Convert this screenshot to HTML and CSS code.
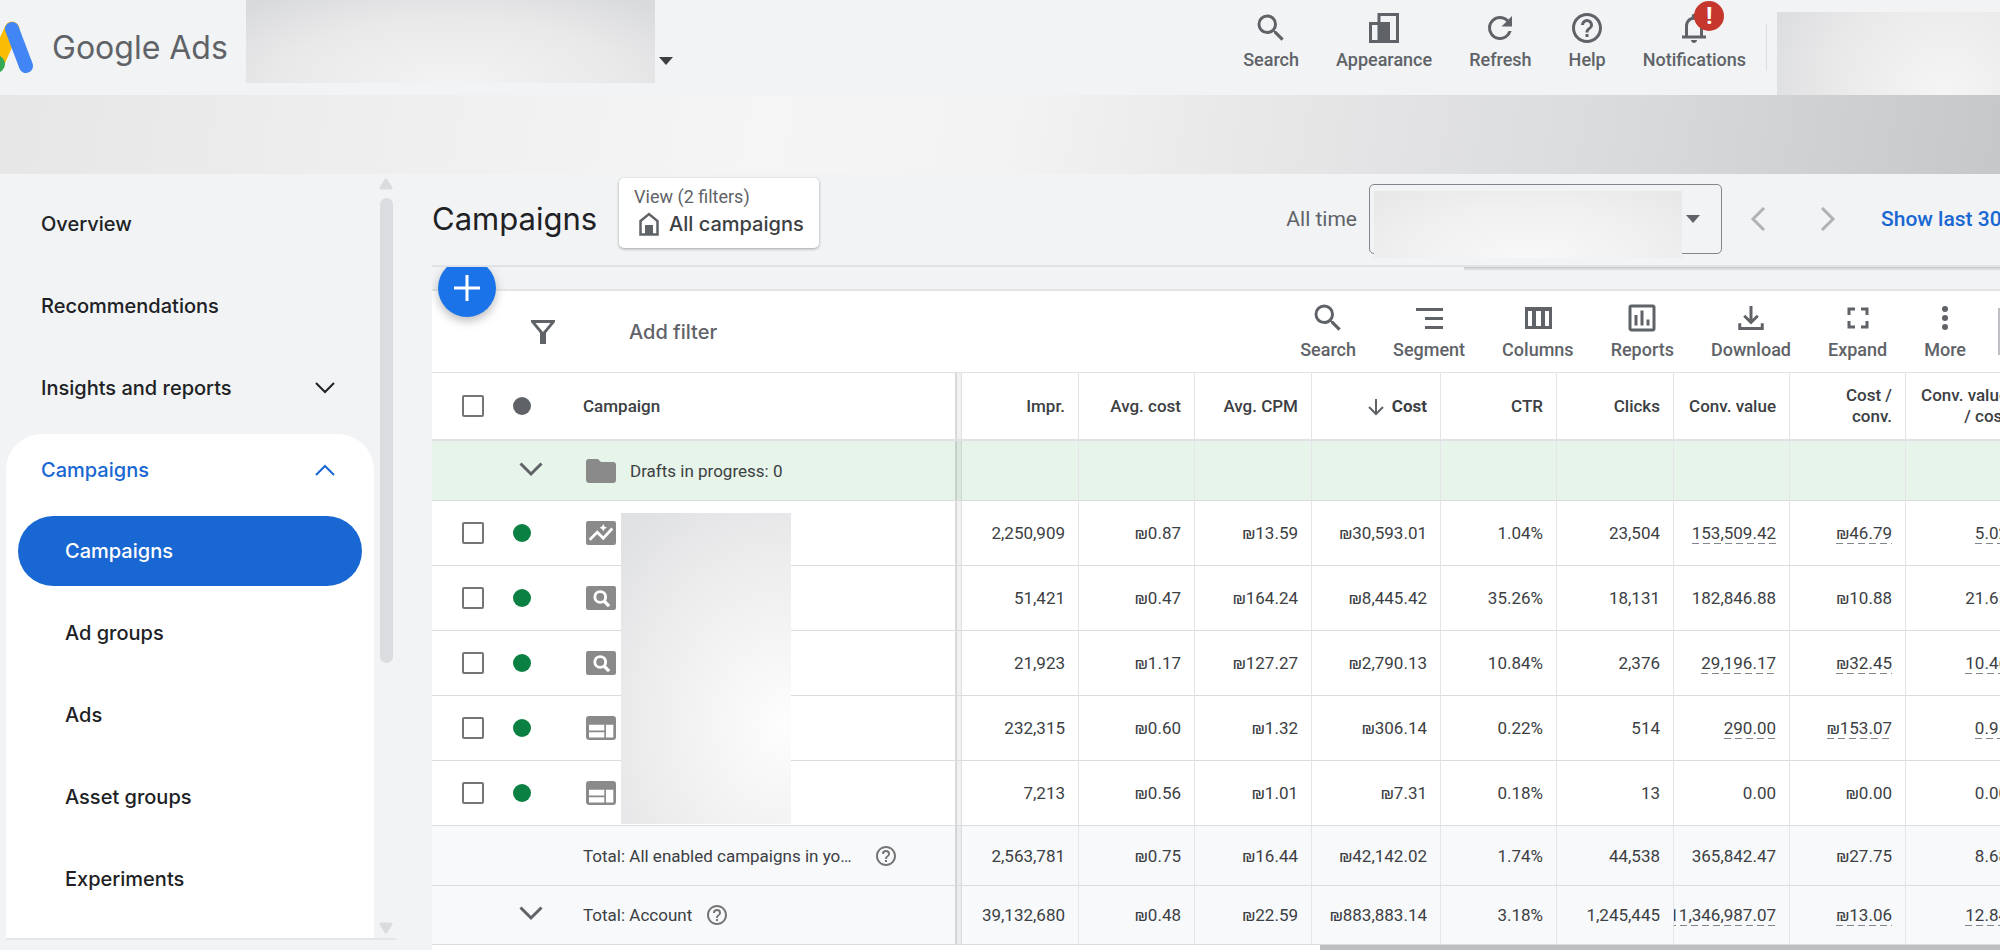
FILE: index.html
```html
<!DOCTYPE html>
<html lang="en">
<head>
<meta charset="utf-8">
<title>Campaigns - Google Ads</title>
<link rel="stylesheet" href="styles.css">
</head>
<body>
<svg class="sprite" aria-hidden="true">
  <symbol id="i-search" viewBox="0 0 24 24"><path d="M15.5 14h-.79l-.28-.27A6.47 6.47 0 0 0 16 9.5 6.5 6.5 0 1 0 9.5 16c1.61 0 3.09-.59 4.23-1.57l.27.28v.79l5 4.99L20.49 19l-4.99-5zm-6 0C7.01 14 5 11.99 5 9.5S7.01 5 9.5 5 14 7.01 14 9.5 11.99 14 9.5 14z"/></symbol>
  <symbol id="i-help" viewBox="0 0 24 24"><path d="M11 18h2v-2h-2v2zm1-16C6.48 2 2 6.48 2 12s4.48 10 10 10 10-4.48 10-10S17.52 2 12 2zm0 18c-4.41 0-8-3.59-8-8s3.59-8 8-8 8 3.59 8 8-3.59 8-8 8zm0-14a4 4 0 0 0-4 4h2c0-1.1.9-2 2-2s2 .9 2 2c0 2-3 1.75-3 5h2c0-2.25 3-2.5 3-5a4 4 0 0 0-4-4z"/></symbol>
  <symbol id="i-down" viewBox="0 0 24 24"><path d="M5 7l7 7 7-7" fill="none" stroke="currentColor" stroke-width="2"/></symbol>
  <symbol id="i-searchcard" viewBox="0 0 24 24"><path fill-rule="evenodd" d="M3.500 4h17A1.500 1.500 0 0 1 22 5.500v13a1.500 1.500 0 0 1-1.500 1.500h-17A1.500 1.500 0 0 1 2 18.500v-13A1.500 1.500 0 0 1 3.500 4z"/><circle cx="11.500" cy="11.300" r="3.600" fill="none" stroke="#fff" stroke-width="1.900"/><path d="M14 14l3.400 3.400" stroke="#fff" stroke-width="2.200"/></symbol>
  <symbol id="i-display" viewBox="0 0 24 24"><path fill-rule="evenodd" d="M20 4H4a2 2 0 0 0-2 2v12c0 1.100.9 2 2 2h16a2 2 0 0 0 2-2V6a2 2 0 0 0-2-2zM14.200 18.300H4v-3.500h10.200zM14.200 13.700H4v-3.900h10.200zM20.200 18.300h-4.900V9.800h4.900z"/></symbol>
</svg>

<header class="topbar">
  <a class="brand" href="#">
    <svg class="brand-logo" viewBox="0 0 36 54" aria-hidden="true">
      <path d="M12 8L-4 44" stroke="#fbbc04" stroke-width="15" stroke-linecap="round"/>
      <circle cx="-4" cy="43" r="9" fill="#34a853"/>
      <path d="M12 8l14 37" stroke="#4285f4" stroke-width="14" stroke-linecap="round"/>
    </svg>
    <span>Google Ads</span>
  </a>
  <div class="account-mask"></div>
  <button class="account-toggle" aria-label="Switch account"><span class="caret"></span></button>
  <div class="top-actions">
    <button class="tool"><svg class="icon" aria-hidden="true"><use href="#i-search"/></svg>Search</button>
    <button class="tool"><svg class="icon" viewBox="0 0 36 36" aria-hidden="true"><path d="M13 4.500h18.500v27H13z" fill="none" stroke="currentColor" stroke-width="3"/><path d="M4.500 13.500h18v18h-18z" fill="none" stroke="currentColor" stroke-width="3"/><path d="M12 12h11v20H12z"/></svg>Appearance</button>
    <button class="tool"><svg class="icon" viewBox="0 0 24 24" aria-hidden="true"><path d="M17.650 6.350A7.960 7.960 0 0 0 12 4a8 8 0 1 0 7.730 10h-2.080A6 6 0 1 1 12 6c1.660 0 3.140.69 4.220 1.780L13 11h7V4l-2.350 2.350z"/></svg>Refresh</button>
    <button class="tool"><svg class="icon" aria-hidden="true"><use href="#i-help"/></svg>Help</button>
    <button class="tool"><span class="bell"><svg class="icon" viewBox="0 0 24 24" aria-hidden="true"><path d="M12 22c1.100 0 2-.9 2-2h-4c0 1.100.9 2 2 2zm6-6v-5c0-3.070-1.630-5.640-4.500-6.320V4a1.500 1.500 0 0 0-3 0v.68C7.640 5.360 6 7.920 6 11v6H4v2h16v-2h-2v-1zm-2 1H8v-6c0-2.480 1.510-4.500 4-4.500s4 2.020 4 4.500v6z"/></svg><span class="badge">!</span></span>Notifications</button>
  </div>
  <div class="top-divider"></div>
  <div class="profile-mask"></div>
</header>

<div class="banner"></div>

<div class="layout">
  <aside class="side">
    <nav class="nav">
      <a class="nav-item" href="#">Overview</a>
      <a class="nav-item" href="#">Recommendations</a>
      <a class="nav-item" href="#">Insights and reports<svg class="chev" viewBox="0 0 20 12" aria-hidden="true"><path d="M1 1l9 9 9-9"/></svg></a>
      <div class="nav-group">
        <a class="nav-item open" href="#">Campaigns<svg class="chev" viewBox="0 0 20 12" aria-hidden="true"><path d="M1 11l9-9 9 9"/></svg></a>
        <a class="nav-item sub active" href="#">Campaigns</a>
        <a class="nav-item sub" href="#">Ad groups</a>
        <a class="nav-item sub" href="#">Ads</a>
        <a class="nav-item sub" href="#">Asset groups</a>
        <a class="nav-item sub" href="#">Experiments</a>
      </div>
    </nav>
    <div class="scroll" aria-hidden="true">
      <svg viewBox="0 0 16 12"><path d="M8 2l5 8H3z"/></svg>
      <div class="scroll-track"><div class="scroll-thumb"></div></div>
      <svg viewBox="0 0 16 12"><path d="M8 10l5-8H3z"/></svg>
    </div>
  </aside>

  <main class="main">
    <div class="head">
      <h1>Campaigns</h1>
      <button class="view">
        <span class="view-label">View (2 filters)</span>
        <span class="view-name"><svg viewBox="0 0 20 24" aria-hidden="true"><path d="M1.500 9L10 2l8.500 7v13.500h-17z" fill="none" stroke="currentColor" stroke-width="2.500"/><path d="M6 13h8v10H6z"/></svg>All campaigns</span>
      </button>
      <div class="range">
        <span class="range-label">All time</span>
        <button class="date" aria-label="Date range"><span class="date-mask"></span><span class="caret"></span></button>
        <div class="steps">
          <button class="step" aria-label="Previous period"><svg viewBox="0 0 16 24"><path d="M14 1L3 12l11 11"/></svg></button>
          <button class="step" aria-label="Next period"><svg viewBox="0 0 16 24"><path d="M2 1l11 11L2 23"/></svg></button>
        </div>
        <a class="last30" href="#">Show last 30 days</a>
      </div>
    </div>

    <div class="strip"><div class="strip-shadow"></div>
      <div class="fab-clip"><button class="fab" aria-label="New campaign"><svg viewBox="0 0 26 26"><path d="M13 0v26M0 13h26"/></svg></button></div>
    </div>

    <div class="filters">
      <svg class="funnel" viewBox="0 0 24 24" aria-hidden="true"><path fill-rule="evenodd" d="M0 0h24v2l-9 11v11H9V13L0 2zM4.500 3l7.500 9 7.500-9z"/></svg>
      <input class="filter-input" type="text" placeholder="Add filter" aria-label="Add filter">
      <div class="tools">
        <button class="tool"><svg class="icon" aria-hidden="true"><use href="#i-search"/></svg>Search</button>
        <button class="tool"><svg class="icon" viewBox="0 0 36 36" aria-hidden="true"><path d="M5 8h27v3H5zM14 17h18v3H14zM14 26h18v3H14z"/></svg>Segment</button>
        <button class="tool"><svg class="icon" viewBox="0 0 36 36" aria-hidden="true"><path fill-rule="evenodd" d="M5 7h27v22H5zM8 11v15h4V11zM16 11v15h5V11zM25 11v15h4V11z"/></svg>Columns</button>
        <button class="tool"><svg class="icon" viewBox="0 0 24 24" aria-hidden="true"><path d="M9 17H7v-7h2v7zm4 0h-2V7h2v10zm4 0h-2v-4h2v4zm2 2H5V5h14v14zm0-16H5a2 2 0 0 0-2 2v14c0 1.100.9 2 2 2h14a2 2 0 0 0 2-2V5a2 2 0 0 0-2-2z"/></svg>Reports</button>
        <button class="tool"><svg class="icon" viewBox="0 0 24 24" aria-hidden="true"><path d="M12 4v10M7.500 10.500L12 15l4.500-4.500M4.500 15.500V19h15v-3.500" fill="none" stroke="currentColor" stroke-width="2"/></svg>Download</button>
        <button class="tool"><svg class="icon" viewBox="0 0 24 24" aria-hidden="true"><path d="M7 14H5v5h5v-2H7v-3zm-2-4h2V7h3V5H5v5zm12 7h-3v2h5v-5h-2v3zM14 5v2h3v3h2V5h-5z"/></svg>Expand</button>
        <button class="tool"><svg class="icon" viewBox="0 0 24 24" aria-hidden="true"><circle cx="12" cy="6" r="2"/><circle cx="12" cy="12" r="2"/><circle cx="12" cy="18" r="2"/></svg>More</button>
      </div>
      <div class="tools-edge"></div>
    </div>

    <div class="grid-wrap">
      <table class="grid">
        <colgroup><col class="c-check"><col class="c-status"><col><col class="c-wide"><col class="c-num"><col class="c-wide"><col class="c-cost"><col class="c-num"><col class="c-wide"><col class="c-num"><col class="c-num"><col class="c-num"></colgroup>
        <thead>
          <tr>
            <th class="check"><input type="checkbox" aria-label="Select all campaigns"></th>
            <th><span class="dot"></span></th>
            <th class="name">Campaign</th>
            <th>Impr.</th><th>Avg. cost</th><th>Avg. CPM</th>
            <th class="sorted"><svg viewBox="0 0 16 18" aria-hidden="true"><path d="M8 1v15M1 9l7 7 7-7"/></svg>Cost</th>
            <th>CTR</th><th>Clicks</th><th>Conv. value</th><th>Cost /<br>conv.</th><th>Conv. value<br>/ cost</th>
          </tr>
        </thead>
        <tbody>
          <tr class="drafts">
            <td></td>
            <td><svg class="icon" aria-hidden="true"><use href="#i-down"/></svg></td>
            <td class="name"><div class="label"><svg class="icon type" viewBox="0 0 24 24" aria-hidden="true"><path d="M10 4H4a2 2 0 0 0-2 2v12c0 1.100.9 2 2 2h16a2 2 0 0 0 2-2V8a2 2 0 0 0-2-2h-8l-2-2z"/></svg>Drafts in progress: 0</div></td>
            <td></td><td></td><td></td><td></td><td></td><td></td><td></td><td></td><td></td>
          </tr>
          <tr>
            <td class="check"><input type="checkbox" aria-label="Select campaign 1"></td><td><span class="dot on"></span></td>
            <td class="name"><svg class="icon type" viewBox="0 0 24 24" aria-hidden="true"><rect x="2" y="4" width="20" height="16" rx="1.500"/><path d="M4.500 16.500l5-5 4 4 6-6.500" fill="none" stroke="#fff" stroke-width="1.800"/><path d="M13.500 6l.8 1.700 1.700.8-1.700.8-.8 1.700-.8-1.700-1.700-.8 1.700-.8z" fill="#fff"/></svg></td>
            <td><div>2,250,909</div></td><td><div>₪0.87</div></td><td><div>₪13.59</div></td><td><div>₪30,593.01</div></td><td><div>1.04%</div></td><td><div>23,504</div></td><td><div><span class="est">153,509.42</span></div></td><td><div><span class="est">₪46.79</span></div></td><td><div><span class="est">5.02</span></div></td>
          </tr>
          <tr>
            <td class="check"><input type="checkbox" aria-label="Select campaign 2"></td><td><span class="dot on"></span></td>
            <td class="name"><svg class="icon type" aria-hidden="true"><use href="#i-searchcard"/></svg></td>
            <td><div>51,421</div></td><td><div>₪0.47</div></td><td><div>₪164.24</div></td><td><div>₪8,445.42</div></td><td><div>35.26%</div></td><td><div>18,131</div></td><td><div>182,846.88</div></td><td><div>₪10.88</div></td><td><div>21.65</div></td>
          </tr>
          <tr>
            <td class="check"><input type="checkbox" aria-label="Select campaign 3"></td><td><span class="dot on"></span></td>
            <td class="name"><svg class="icon type" aria-hidden="true"><use href="#i-searchcard"/></svg></td>
            <td><div>21,923</div></td><td><div>₪1.17</div></td><td><div>₪127.27</div></td><td><div>₪2,790.13</div></td><td><div>10.84%</div></td><td><div>2,376</div></td><td><div><span class="est">29,196.17</span></div></td><td><div><span class="est">₪32.45</span></div></td><td><div><span class="est">10.46</span></div></td>
          </tr>
          <tr>
            <td class="check"><input type="checkbox" aria-label="Select campaign 4"></td><td><span class="dot on"></span></td>
            <td class="name"><svg class="icon type" aria-hidden="true"><use href="#i-display"/></svg></td>
            <td><div>232,315</div></td><td><div>₪0.60</div></td><td><div>₪1.32</div></td><td><div>₪306.14</div></td><td><div>0.22%</div></td><td><div>514</div></td><td><div><span class="est">290.00</span></div></td><td><div><span class="est">₪153.07</span></div></td><td><div><span class="est">0.95</span></div></td>
          </tr>
          <tr>
            <td class="check"><input type="checkbox" aria-label="Select campaign 5"></td><td><span class="dot on"></span></td>
            <td class="name"><svg class="icon type" aria-hidden="true"><use href="#i-display"/></svg></td>
            <td><div>7,213</div></td><td><div>₪0.56</div></td><td><div>₪1.01</div></td><td><div>₪7.31</div></td><td><div>0.18%</div></td><td><div>13</div></td><td><div>0.00</div></td><td><div>₪0.00</div></td><td><div>0.00</div></td>
          </tr>
        </tbody>
        <tfoot>
          <tr>
            <td></td><td></td>
            <td class="name"><div class="label total"><span class="clip">Total: All enabled campaigns in your current view</span><svg class="hint" aria-hidden="true"><use href="#i-help"/></svg></div></td>
            <td><div>2,563,781</div></td><td><div>₪0.75</div></td><td><div>₪16.44</div></td><td><div>₪42,142.02</div></td><td><div>1.74%</div></td><td><div>44,538</div></td><td><div>365,842.47</div></td><td><div>₪27.75</div></td><td><div>8.68</div></td>
          </tr>
          <tr>
            <td></td><td><svg class="icon" aria-hidden="true"><use href="#i-down"/></svg></td>
            <td class="name"><div class="label total"><span class="clip">Total: Account</span><svg class="hint" aria-hidden="true"><use href="#i-help"/></svg></div></td>
            <td><div>39,132,680</div></td><td><div>₪0.48</div></td><td><div>₪22.59</div></td><td><div>₪883,883.14</div></td><td><div>3.18%</div></td><td><div>1,245,445</div></td><td><div><span class="est">11,346,987.07</span></div></td><td><div><span class="est">₪13.06</span></div></td><td><div><span class="est">12.84</span></div></td>
          </tr>
        </tfoot>
      </table>
      <div class="names-mask"></div>
    </div>
    <div class="hscroll" aria-hidden="true"><div class="hscroll-thumb"></div></div>
  </main>
</div>
</body>
</html>
```
FILE: styles.css
```css
* { box-sizing: border-box; }

body {
  margin: 0;
  height: 100vh;
  display: flex;
  flex-direction: column;
  overflow: hidden;
  background: #f1f3f4;
  color: #3c4043;
  font-family: Roboto, "Noto Sans", sans-serif;
  font-size: 17px;
  line-height: 20px;
}

button, input {
  margin: 0;
  padding: 0;
  border: 0;
  background: none;
  color: inherit;
  font: inherit;
}

a { color: inherit; text-decoration: none; }
svg { display: block; fill: currentColor; flex: none; }
.sprite { position: absolute; width: 0; height: 0; }
.icon { width: 36px; height: 36px; }

.caret {
  display: block;
  width: 0;
  height: 0;
  border: 7px solid transparent;
  border-top: 8px solid #3c4043;
  border-bottom: 0;
}

/* Top bar */
.topbar { display: flex; flex: none; height: 95px; }

.brand {
  display: flex;
  align-items: center;
  gap: 16px;
  width: 246px;
  color: #5f6368;
  font-family: Inter, sans-serif;
  font-size: 32px;
  line-height: 40px;
}
.brand-logo { width: 36px; height: 54px; fill: none; }

.account-mask {
  width: 409px;
  height: 83px;
  background: radial-gradient(ellipse 70% 130% at 50% 100%, #f3f3f3, #e9e9ea 60%, #d9dadc);
}
.account-toggle { align-self: flex-start; padding: 57px 4px 8px; }

.top-actions { display: flex; gap: 37px; margin-left: auto; padding-top: 10px; }

.tool {
  display: flex;
  flex-direction: column;
  align-items: center;
  gap: 4px;
  color: #5f6368;
  font-size: 18px;
  font-weight: 500;
}
.bell { position: relative; }
.badge {
  position: absolute;
  left: 18px;
  top: -9px;
  width: 30px;
  height: 30px;
  border-radius: 50%;
  background: #c5372c;
  color: #fff;
  font-size: 24px;
  font-weight: 700;
  line-height: 30px;
  text-align: center;
}
.top-divider { width: 1px; margin: 24px 10px 24px 20px; background: #dadce0; }
.profile-mask {
  width: 223px;
  margin-top: 12px;
  background: radial-gradient(circle at 75% 100%, #f5f5f5, #e9e9ea 60%, #dcdddf);
}

.banner {
  flex: none;
  height: 79px;
  background: linear-gradient(100deg, #e6e6e7, #eeeeef 18%, #f5f5f5 38%, #f3f3f3 50%, #e8e8e9 62%, #dadbdd 80%, #c6c7c9);
}

.layout { display: flex; flex: 1; min-height: 0; }

/* Side navigation */
.side {
  display: flex;
  flex: none;
  gap: 4px;
  width: 390px;
  margin: 0 36px 10px 6px;
  border-bottom: 2px solid #e3e5e7;
}
.nav {
  width: 368px;
  padding-top: 9px;
  overflow: hidden;
  color: #202124;
  font-family: Inter, sans-serif;
  font-size: 20px;
  font-weight: 500;
}
.nav-item {
  display: flex;
  align-items: center;
  justify-content: space-between;
  height: 82px;
  padding: 0 39px 0 35px;
}
.nav-group { height: 100%; margin-top: 5px; border-radius: 36px 36px 0 0; background: #fff; }
.nav-item.sub { padding-left: 59px; }
.nav-item.open { height: 72px; color: #1967d2; }
.nav-item.active {
  height: 70px;
  margin: 10px 12px 6px;
  border-radius: 35px;
  background: #1967d2;
  color: #fff;
}
.nav-item.sub.active { padding-left: 47px; }
.chev { width: 20px; height: 12px; fill: none; stroke: currentColor; stroke-width: 2px; }

.scroll {
  display: flex;
  flex-direction: column;
  align-items: center;
  gap: 8px;
  width: 16px;
  padding: 4px 0;
  color: #dadce0;
}
.scroll svg { width: 16px; height: 12px; stroke: currentColor; stroke-width: 3px; stroke-linejoin: round; }
.scroll-track { flex: 1; }
.scroll-thumb { width: 13px; height: 65%; border-radius: 7px; background: #dadce0; }

/* Page heading */
.main { display: flex; flex: 1; flex-direction: column; min-width: 0; overflow: hidden; }

.head {
  display: flex;
  flex: none;
  align-items: center;
  height: 93px;
  padding-bottom: 2px;
  border-bottom: 2px solid #e0e2e5;
}
h1 {
  margin: 0 22px 0 0;
  color: #202124;
  font-family: Inter, sans-serif;
  font-size: 31px;
  font-weight: 400;
  line-height: 40px;
}
.view {
  height: 70px;
  margin-bottom: 12px;
  padding: 0 15px 2px;
  border-radius: 5px;
  background: #fff;
  box-shadow: 0 1px 3px rgba(60, 64, 67, .45);
  text-align: left;
}
.view-label { display: block; margin-bottom: 5px; color: #5f6368; font-size: 18px; }
.view-name {
  display: flex;
  align-items: center;
  gap: 10px;
  padding-left: 5px;
  font-family: Inter, sans-serif;
  font-size: 20px;
  font-weight: 500;
  line-height: 24px;
}
.view-name svg { width: 20px; height: 24px; color: #5f6368; }

.range { display: flex; align-items: center; margin-left: auto; color: #5f6368; font-size: 21px; line-height: 24px; }
.date {
  position: relative;
  display: flex;
  align-items: center;
  justify-content: flex-end;
  width: 353px;
  height: 70px;
  margin: 0 24px 0 12px;
  padding-right: 21px;
  border: 1px solid #80868b;
  border-radius: 5px;
}
.date .caret { border-top-color: #5f6368; }
.date-mask {
  position: absolute;
  left: 4px;
  top: 6px;
  width: 308px;
  height: 67px;
  background: radial-gradient(ellipse at 50% 100%, #f8f8f8, #f0f0f0 55%, #e7e7e8);
}
.steps { display: flex; gap: 46px; margin-right: 41px; }
.step { padding: 4px; color: #b0b3b6; }
.step svg { width: 16px; height: 24px; fill: none; stroke: currentColor; stroke-width: 3px; }
.last30 { width: 119px; overflow: hidden; color: #1967d2; font-weight: 500; white-space: nowrap; }

/* Strip between heading and table */
.strip { position: relative; flex: none; height: 24px; border-bottom: 2px solid #e3e5e7; }
.strip-shadow { height: 4px; margin-left: 1032px; background: linear-gradient(#c4c6c9, #f1f3f4); }
.fab-clip { position: absolute; left: -14px; top: 0; width: 100px; height: 80px; overflow: hidden; }
.fab {
  display: flex;
  align-items: center;
  justify-content: center;
  width: 58px;
  height: 58px;
  margin: -8px 0 0 20px;
  border-radius: 50%;
  background: #1a73e8;
  box-shadow: 0 4px 10px rgba(60, 64, 67, .35);
  color: #fff;
}
.fab svg { width: 26px; height: 26px; stroke: currentColor; stroke-width: 3px; }

/* Filter bar */
.filters {
  display: flex;
  flex: none;
  align-items: center;
  height: 82px;
  padding-left: 99px;
  border-bottom: 1px solid #dfe1e5;
  background: #fff;
  color: #5f6368;
}
.funnel { width: 24px; height: 24px; margin-right: 74px; }
.filter-input { flex: 1; min-width: 100px; font-family: Inter, sans-serif; font-size: 20px; line-height: 24px; font-weight: 500; }
.filter-input::placeholder { color: #5f6368; opacity: 1; }
.tools { display: flex; gap: 37px; margin-right: 32px; padding-bottom: 3px; }
.tools-edge { width: 2px; height: 47px; background: #bdc1c6; }

/* Campaign table */
.grid-wrap { position: relative; flex: none; overflow: hidden; background: #fff; }
.grid { width: calc(100% + 22px); table-layout: fixed; border-collapse: separate; border-spacing: 0; }
.c-check { width: 81px; }
.c-status { width: 70px; }
.c-num { width: 116px; }
.c-wide { width: 117px; }
.c-cost { width: 129px; }

th, td {
  height: 65px;
  padding: 0;
  border-right: 1px solid #e3e5e8;
  border-bottom: 1px solid #dadce0;
  text-align: right;
}
th { height: 68px; padding-right: 13px; border-bottom: 2px solid #dfe1e5; font-weight: 500; line-height: 21px; }
th:nth-child(-n+3), td:nth-child(-n+3) { padding: 0; border-right: 0; text-align: left; }
.name {
  background-image: linear-gradient(to right, rgba(60, 64, 67, .2) 2px, rgba(60, 64, 67, .07) 2px 6px, rgba(60, 64, 67, .16) 6px);
  background-position: right;
  background-size: 7px 100%;
  background-repeat: no-repeat;
}
td > div { display: flex; justify-content: flex-end; padding-right: 13px; overflow: hidden; }
td > .label { align-items: center; justify-content: flex-start; gap: 11px; padding-right: 50px; }
.sorted { font-weight: 700; }
.sorted svg { display: inline-block; width: 16px; height: 18px; margin-right: 8px; vertical-align: middle; fill: none; stroke: #5f6368; stroke-width: 2px; }

.drafts td { height: 60px; background-color: #e6f4ea; }
tfoot td { height: 60px; background-color: #f8f9fb; }
tfoot tr:last-child td { height: 59px; }
td .icon { color: #5f6368; }
td .type { color: #8a8a8a; }

input[type="checkbox"] {
  display: block;
  width: 22px;
  height: 22px;
  margin-left: 30px;
  appearance: none;
  border: 2px solid #757575;
  border-radius: 2px;
}
.dot { display: block; width: 18px; height: 18px; border-radius: 50%; background: #5f6368; }
.dot.on { background: #0b8043; }

.est { padding-bottom: 1px; background: repeating-linear-gradient(to right, #80868b 0 7px, transparent 7px 11px) bottom / 100% 1px no-repeat; }
.clip { overflow: hidden; max-width: 278px; text-overflow: ellipsis; white-space: nowrap; }
td > .total { gap: 13px; padding-right: 0; }
.hint { width: 24px; height: 24px; color: #757575; }

.names-mask {
  position: absolute;
  left: 189px;
  top: 140px;
  width: 170px;
  height: 311px;
  background: radial-gradient(ellipse 130% 85% at 95% 68%, #fdfdfd, #ececed 65%, #e0e1e3);
}

.hscroll { flex: none; height: 12px; background: #fff; }
.hscroll-thumb { height: 12px; margin-left: 888px; background: #bdbfc3; }
```
